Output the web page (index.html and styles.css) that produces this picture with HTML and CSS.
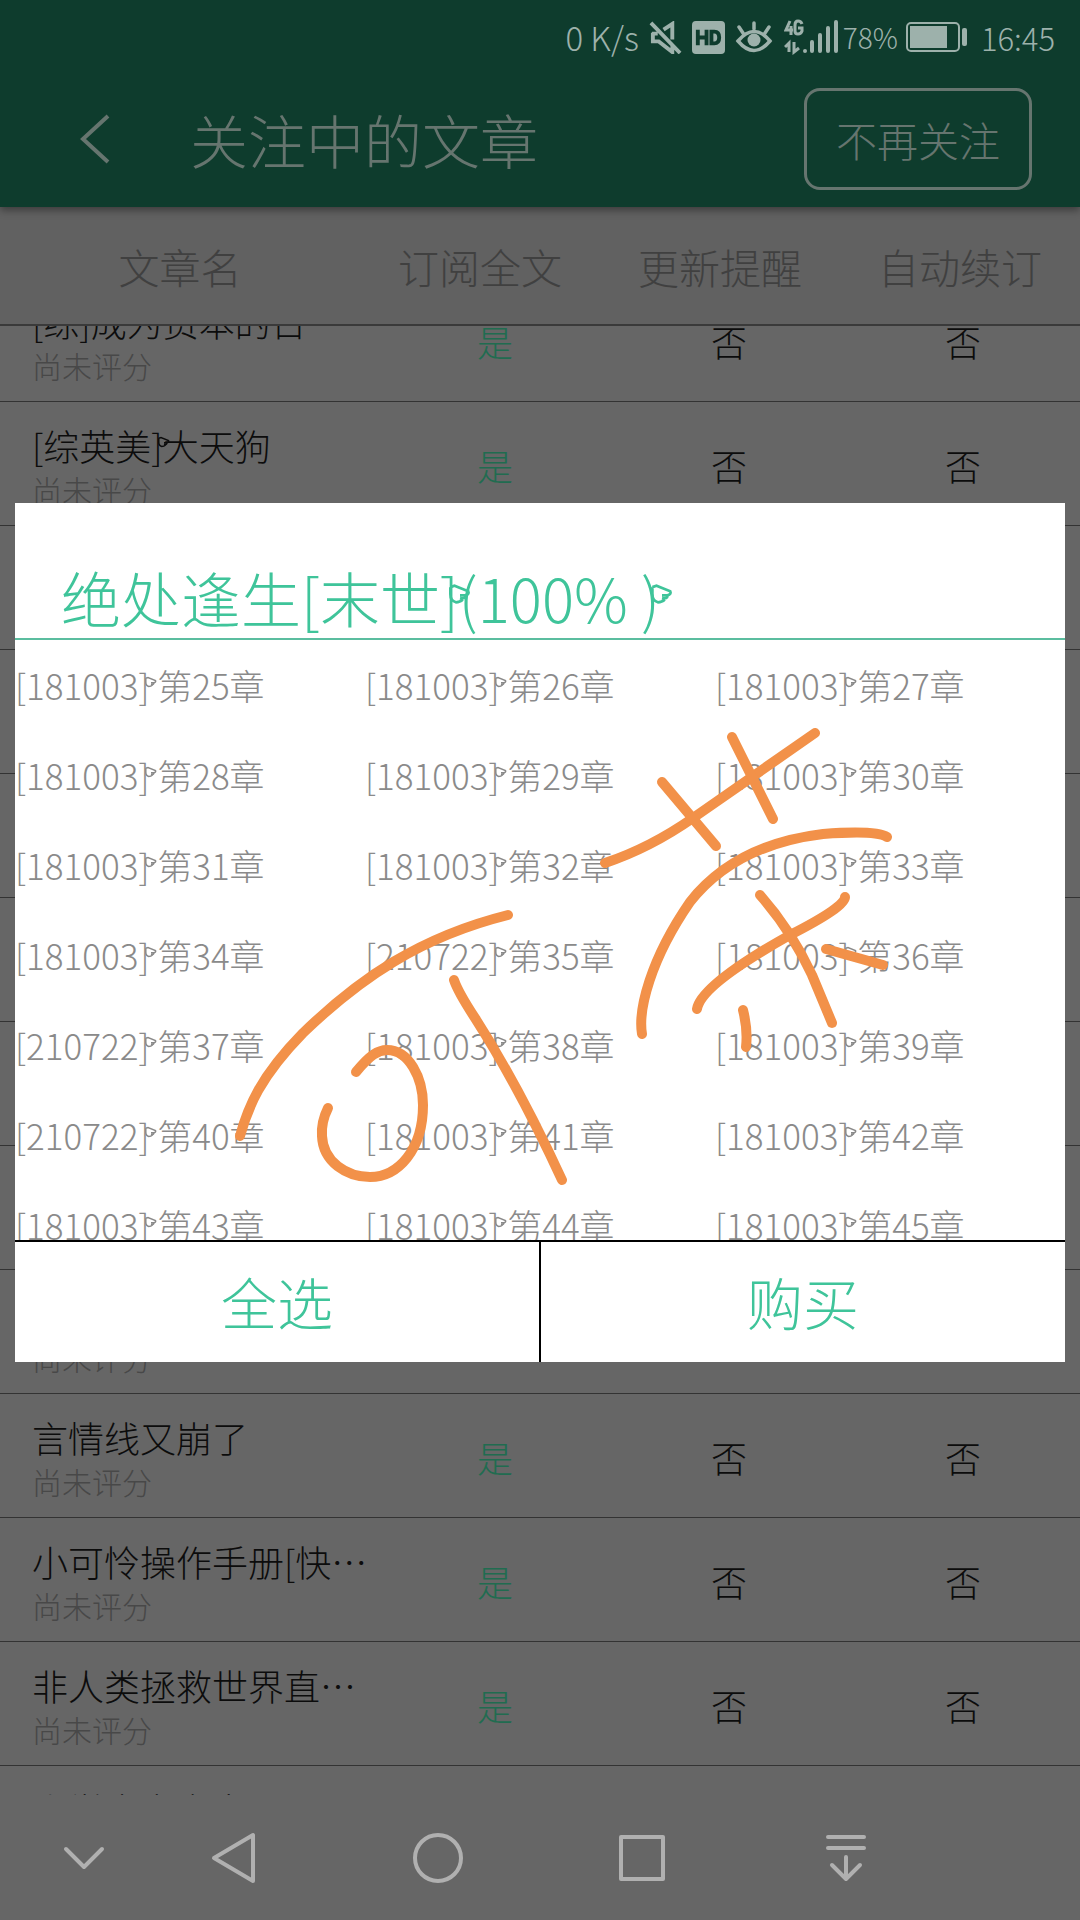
FILE: index.html
```
<!DOCTYPE html>
<html lang="zh-CN">
<head>
<meta charset="utf-8">
<meta name="viewport" content="width=device-width">
<title>关注中的文章</title>
<link rel="stylesheet" href="styles.css">
</head>
<body>
<svg class="defs" aria-hidden="true"><symbol id="hand" viewBox="0 0 16 16"><path d="M1 3 4 2 14 6Q15 8 12 9L8 9M12 9Q12 12 8 11M10 12Q8 14 5 14Q1 13 1 8V3"/></symbol></svg>
<header class="top">
  <div class="status">
    <span class="speed">0 K/s</span>
    <svg class="st-icon" viewBox="0 0 34 34" aria-hidden="true"><g fill="none" stroke="currentColor" stroke-width="4"><path d="M2 2 32 33M15 9 24 3V19M4 12V21H10L24 32V26M3 13H9"/></g></svg>
    <svg class="st-icon" viewBox="0 0 34 34" aria-hidden="true"><rect width="34" height="34" rx="4" fill="currentColor"/><path d="M6 9V25M15 9V25M6 17H15M20 11V23H23Q28 23 28 17T23 11Z" fill="none" stroke="#0e3c2d" stroke-width="4"/></svg>
    <svg class="eye" viewBox="0 0 38 34" aria-hidden="true"><path d="M3 21Q19 2 35 21Q19 40 3 21ZM19 3V9M4 7 8 13M34 7 30 13" fill="none" stroke="currentColor" stroke-width="3.5" stroke-linecap="round"/><circle cx="19" cy="20" r="6.5" fill="currentColor"/></svg>
    <svg class="signal" viewBox="0 0 54 36" aria-hidden="true"><g fill="none" stroke="currentColor" stroke-width="3"><path d="M6 2 2 11H9M7 7V16M18 5Q17 2 14 2T11 6V12Q11 15 14 15T18 12V9H14M5 33V24L1 28M10 23V33L15 29"/></g><g stroke="currentColor" stroke-width="4" stroke-linecap="round"><path d="M21 32V32M28 32V23M36 32V16M44 32V9M52 32V3"/></g></svg>
    <span class="percent">78%</span>
    <svg class="battery" viewBox="0 0 62 30" aria-hidden="true"><rect x="1" y="1" width="52" height="28" rx="4" fill="none" stroke="currentColor" stroke-width="2"/><rect x="4" y="4" width="37" height="22" fill="currentColor"/><rect x="56" y="6" width="5" height="18" rx="2" fill="currentColor"/></svg>
    <span class="clock">16:45</span>
  </div>
  <div class="bar">
    <button class="back" aria-label="返回"><svg viewBox="0 0 30 50"><path d="M28 2 3 25 28 48" fill="none" stroke="currentColor" stroke-width="4"/></svg></button>
    <h1>关注中的文章</h1>
    <button class="unfollow">不再关注</button>
  </div>
</header>
<table class="articles">
  <thead><tr><th>文章名</th><th>订阅全文</th><th>更新提醒</th><th>自动续订</th></tr></thead>
  <tbody>
    <tr><td><p>[综]成为资本的日</p><small>尚未评分</small></td><td class="yes">是</td><td>否</td><td>否</td></tr>
    <tr><td><p>[综英美<span class="mark">]<svg><use href="#hand"/></svg></span>大天狗</p><small>尚未评分</small></td><td class="yes">是</td><td>否</td><td>否</td></tr>
    <tr><td></td></tr>
    <tr><td></td></tr>
    <tr><td></td></tr>
    <tr><td></td></tr>
    <tr><td></td></tr>
    <tr><td></td></tr>
    <tr><td><p>&nbsp;</p><small>尚未评分</small></td></tr>
    <tr><td><p>言情线又崩了</p><small>尚未评分</small></td><td class="yes">是</td><td>否</td><td>否</td></tr>
    <tr><td><p>小可怜操作手册[快…</p><small>尚未评分</small></td><td class="yes">是</td><td>否</td><td>否</td></tr>
    <tr><td><p>非人类拯救世界直…</p><small>尚未评分</small></td><td class="yes">是</td><td>否</td><td>否</td></tr>
    <tr><td><p>小学生穿书文</p><small>&nbsp;</small></td></tr>
  </tbody>
</table>
<nav class="softkeys">
  <button aria-label="收起"><svg viewBox="0 0 60 60"><path d="M12 21 30 39 48 21"/></svg></button>
  <button aria-label="后退"><svg viewBox="0 0 60 60"><path d="M49 7V53L10 30Z"/></svg></button>
  <button aria-label="主页"><svg viewBox="0 0 60 60"><circle cx="30" cy="30" r="23"/></svg></button>
  <button aria-label="最近任务"><svg viewBox="0 0 60 60"><rect x="9" y="9" width="42" height="42"/></svg></button>
  <button aria-label="通知"><svg viewBox="0 0 60 60"><path d="M12 9H48M12 20H48M30 29V50M16 37 30 51 44 37"/></svg></button>
</nav>
<div class="overlay">
  <section class="dialog" role="dialog" aria-labelledby="book">
    <h2 id="book">绝处逢生[末世<span class="mark">]<svg><use href="#hand"/></svg></span>(100% <span class="mark">)<svg><use href="#hand"/></svg></span></h2>
    <div class="chapters">
      <button>[181003<span class="mark">]<svg><use href="#hand"/></svg></span> 第25章</button>
      <button>[181003<span class="mark">]<svg><use href="#hand"/></svg></span> 第26章</button>
      <button>[181003<span class="mark">]<svg><use href="#hand"/></svg></span> 第27章</button>
      <button>[181003<span class="mark">]<svg><use href="#hand"/></svg></span> 第28章</button>
      <button>[181003<span class="mark">]<svg><use href="#hand"/></svg></span> 第29章</button>
      <button>[181003<span class="mark">]<svg><use href="#hand"/></svg></span> 第30章</button>
      <button>[181003<span class="mark">]<svg><use href="#hand"/></svg></span> 第31章</button>
      <button>[181003<span class="mark">]<svg><use href="#hand"/></svg></span> 第32章</button>
      <button>[181003<span class="mark">]<svg><use href="#hand"/></svg></span> 第33章</button>
      <button>[181003<span class="mark">]<svg><use href="#hand"/></svg></span> 第34章</button>
      <button>[210722<span class="mark">]<svg><use href="#hand"/></svg></span> 第35章</button>
      <button>[181003<span class="mark">]<svg><use href="#hand"/></svg></span> 第36章</button>
      <button>[210722<span class="mark">]<svg><use href="#hand"/></svg></span> 第37章</button>
      <button>[181003<span class="mark">]<svg><use href="#hand"/></svg></span> 第38章</button>
      <button>[181003<span class="mark">]<svg><use href="#hand"/></svg></span> 第39章</button>
      <button>[210722<span class="mark">]<svg><use href="#hand"/></svg></span> 第40章</button>
      <button>[181003<span class="mark">]<svg><use href="#hand"/></svg></span> 第41章</button>
      <button>[181003<span class="mark">]<svg><use href="#hand"/></svg></span> 第42章</button>
      <button>[181003<span class="mark">]<svg><use href="#hand"/></svg></span> 第43章</button>
      <button>[181003<span class="mark">]<svg><use href="#hand"/></svg></span> 第44章</button>
      <button>[181003<span class="mark">]<svg><use href="#hand"/></svg></span> 第45章</button>
    </div>
    <div class="actions"><button>全选</button><button>购买</button></div>
    <svg class="ink" viewBox="15 503 1050 859" aria-hidden="true">
      <path d="M605 863Q650 848 693 818T815 733"/>
      <path d="M732 737 752 777 773 819"/>
      <path d="M662 782 716 846"/>
      <path d="M642 1034C638 1010 650 960 690 902C720 864 765 841 823 834Q876 830 887 837"/>
      <path d="M760 895Q791 930 812 975L832 1023"/>
      <path d="M845 897Q845 907 790 935Q701 985 697 1009"/>
      <path d="M826 949 883 965"/>
      <path d="M743 1010Q748 1030 746 1047"/>
      <path d="M508 915C420 937 360 978 303 1033C260 1077 248 1107 240 1136"/>
      <path d="M454 980Q458 992 475 1018Q518 1085 562 1180"/>
      <path d="M356 1072C370 1055 378 1050 387 1050C409 1050 423 1078 423 1105C423 1150 398 1177 370 1177C347 1177 323 1162 322 1136Q321 1122 328 1108"/>
    </svg>
  </section>
</div>
</body>
</html>
```
FILE: styles.css
```
* { box-sizing: border-box; }
body {
  margin: 0;
  height: 100vh;
  position: relative;
  display: flex;
  flex-direction: column;
  overflow: hidden;
  background: #666;
  color: #0c0c0c;
  font-family: "Noto Sans CJK SC", sans-serif;
  font-weight: 300;
}
button { font: inherit; color: inherit; background: none; border: 0; padding: 0; }
h1, h2, p { margin: 0; font-weight: inherit; }
svg { display: block; }
.defs { position: absolute; width: 0; height: 0; }

.top {
  position: relative;
  flex: none;
  background: #0e3c2d;
  color: #66756f;
  box-shadow: 0 3px 8px rgba(0, 0, 0, .4);
}
.status {
  display: flex;
  align-items: center;
  justify-content: flex-end;
  height: 74px;
  padding-right: 25px;
  color: #9db1ab;
  font-size: 31px;
}
.speed { font-size: 33px; }
.st-icon { width: 33px; height: 33px; margin-left: 10px; }
.eye { width: 38px; height: 34px; margin-left: 10px; }
.signal { width: 54px; height: 36px; margin-left: 11px; }
.percent { margin-left: 5px; font-size: 28px; }
.battery { width: 62px; height: 30px; margin: 0 13px 0 8px; }
.bar { display: flex; align-items: center; height: 133px; padding: 0 48px 3px 80px; }
.back svg { width: 30px; height: 50px; }
.bar h1 { flex: 1; padding-left: 80px; font-size: 58px; line-height: 80px; }
.unfollow { width: 228px; height: 102px; border: 3px solid #66756f; border-radius: 16px; font-size: 41px; }

.articles { flex: 1; min-height: 0; display: flex; flex-direction: column; }
.articles thead { display: block; flex: none; background: #616161; border-bottom: 2px solid #3a3a3a; }
.articles thead tr { display: grid; grid-template-columns: 3fr 2fr 2fr 2fr; height: 117px; align-items: center; }
.articles th { padding: 0; font-size: 41px; font-weight: inherit; color: #404040; }
.articles tbody { display: block; flex: 1; min-height: 0; overflow: hidden; }
.articles tbody tr {
  display: grid;
  grid-template-columns: 21fr 13fr 13fr 13fr;
  height: 124px;
  align-items: center;
  border-bottom: 1px solid #333;
}
.articles tbody tr:first-child { margin-top: -48px; }
.articles td { padding: 2px 0 0; text-align: center; font-size: 36px; }
.articles td:first-child { padding: 2px 0 0 32px; text-align: left; white-space: nowrap; }
.articles td.yes { color: #206c50; }
.articles p { font-size: 36px; line-height: 48px; }
.articles small { display: block; font-size: 30px; line-height: 40px; color: #484848; }

.softkeys {
  flex: none;
  display: grid;
  grid-template-columns: 8fr 17fr 17fr 17fr 17fr;
  justify-items: center;
  align-items: center;
  height: 125px;
  padding: 0 132px 0 36px;
  background: #666;
}
.softkeys svg { width: 60px; height: 60px; fill: none; stroke: #b0b0b0; stroke-width: 4; stroke-linejoin: round; stroke-linecap: round; }

.overlay { position: absolute; inset: 0; display: flex; align-items: center; padding: 0 15px 55px; }
.dialog { position: relative; flex: 1; background: #fff; }
.dialog h2 { padding: 54px 0 1px 46px; font-size: 60px; line-height: 80px; color: #3fc49a; border-bottom: 2px solid #5bbd9f; }
.chapters { display: grid; grid-template-columns: repeat(3, 1fr); grid-auto-rows: 90px; height: 600px; overflow: hidden; }
.chapters button { padding-bottom: 2px; text-align: left; font-size: 35px; color: #8a8a8a; }
.actions { display: flex; border-top: 2px solid #000; }
.actions button { flex: 1; height: 120px; padding-bottom: 4px; font-size: 56px; color: #3fc49a; }
.actions button + button { border-left: 2px solid #000; }
.mark { position: relative; }
.mark svg { position: absolute; left: 60%; top: 34%; width: 12px; height: 12px; fill: none; stroke: currentColor; stroke-width: 2; }
h2 .mark svg { left: 50%; width: 22px; height: 22px; }
.ink { position: absolute; inset: 0; width: 100%; height: 100%; pointer-events: none; fill: none; stroke: #f29149; stroke-width: 10; stroke-linecap: round; stroke-linejoin: round; }
```
